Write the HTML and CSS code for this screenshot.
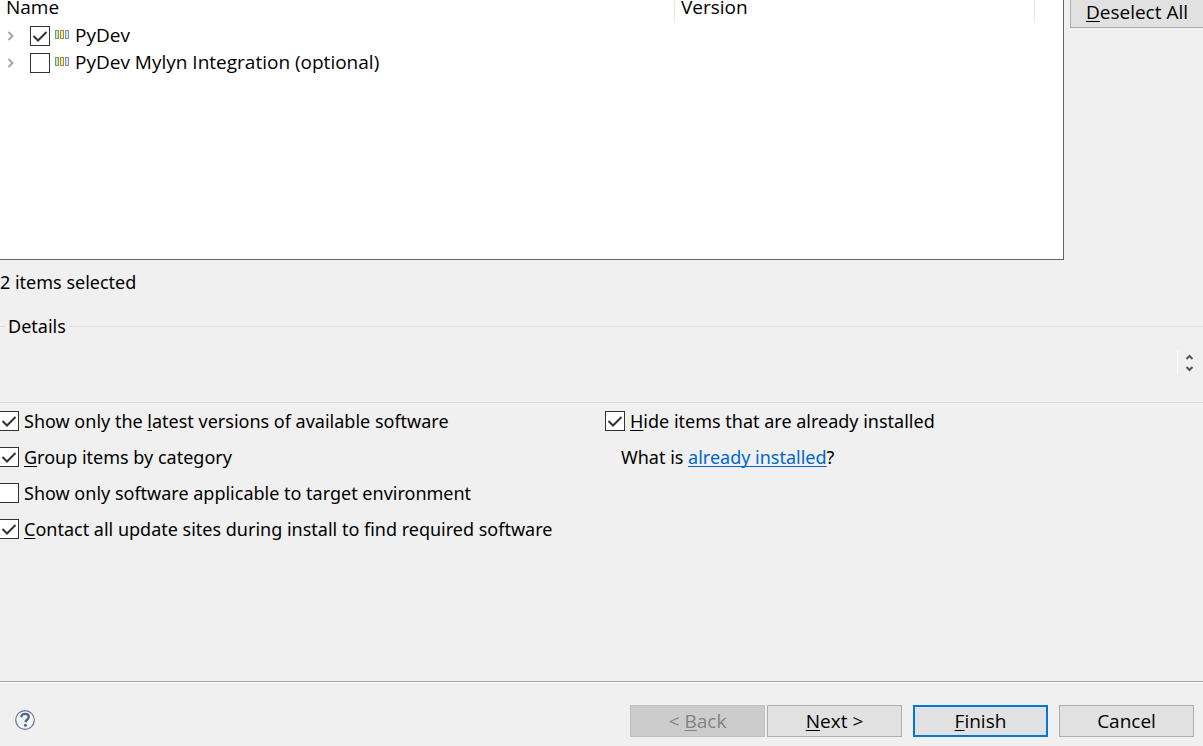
FILE: index.html
```html
<!DOCTYPE html>
<html lang="en">
<head>
<meta charset="utf-8">
<title>Install</title>
<link rel="stylesheet" href="styles.css">
</head>
<body>
<svg class="defs" aria-hidden="true">
  <symbol id="chevron" viewBox="0 0 6 10"><path d="M.5 1l4 4-4 4" fill="none" stroke="#a6a6a6" stroke-width="2"/></symbol>
  <symbol id="category" viewBox="0 0 14 9">
    <rect x=".5" y=".5" width="3" height="8" fill="#cfe5a6" stroke="#6b9f7c"/>
    <rect x="5.5" y=".5" width="3" height="8" fill="#fbe9a9" stroke="#b58a26"/>
    <rect x="10.5" y=".5" width="3" height="8" fill="#d3e4f8" stroke="#7892bd"/>
  </symbol>
</svg>
<main class="page">
  <section class="software">
    <div class="tree">
      <table class="tree-table">
        <thead>
          <tr><th class="col-name">Name</th><th class="col-version">Version</th><th class="col-rest"></th></tr>
        </thead>
        <tbody>
          <tr>
            <td><div class="item"><svg class="chevron"><use href="#chevron"/></svg><input class="check" type="checkbox" id="pydev" checked><svg class="category"><use href="#category"/></svg><label for="pydev">PyDev</label></div></td>
            <td></td><td></td>
          </tr>
          <tr>
            <td><div class="item"><svg class="chevron"><use href="#chevron"/></svg><input class="check" type="checkbox" id="mylyn"><svg class="category"><use href="#category"/></svg><label for="mylyn">PyDev Mylyn Integration (optional)</label></div></td>
            <td></td><td></td>
          </tr>
        </tbody>
      </table>
    </div>
    <div class="side"><button class="button side-button" type="button"><span><u>D</u>eselect All</span></button></div>
  </section>
  <p class="status">2 items selected</p>
  <fieldset class="details">
    <legend>Details</legend>
    <div class="scroller">
      <button type="button" aria-label="Scroll up"><svg viewBox="0 0 8 6"><path d="M1 5l3-3 3 3" fill="none" stroke="#555" stroke-width="2"/></svg></button>
      <button type="button" aria-label="Scroll down"><svg viewBox="0 0 8 6"><path d="M1 1l3 3 3-3" fill="none" stroke="#555" stroke-width="2"/></svg></button>
    </div>
  </fieldset>
  <section class="options">
    <div class="column">
      <label class="option"><input class="check" type="checkbox" checked><span>Show only the <u>l</u>atest versions of available software</span></label>
      <label class="option"><input class="check" type="checkbox" checked><span><u>G</u>roup items by category</span></label>
      <label class="option"><input class="check" type="checkbox"><span>Show only software applicable to target environment</span></label>
      <label class="option"><input class="check" type="checkbox" checked><span><u>C</u>ontact all update sites during install to find required software</span></label>
    </div>
    <div class="column">
      <label class="option"><input class="check" type="checkbox" checked><span><u>H</u>ide items that are already installed</span></label>
      <p class="hint">What is <a href="#">already installed</a>?</p>
    </div>
  </section>
</main>
<footer class="footer">
  <button class="help" type="button" aria-label="Help">
    <svg viewBox="0 0 20 20"><circle cx="10" cy="10" r="9.3" fill="#f4f5f7" stroke="#647899" stroke-width="1.2"/><path d="M6.4 7.3C6.3 4.9 8 3.9 10.1 3.9c2.2 0 3.7 1.2 3.7 3 0 2.5-3.3 2.7-3.3 5.3" fill="none" stroke="#4d648d" stroke-width="2.3"/><circle cx="10.4" cy="15.2" r="1.5" fill="#4d648d"/></svg>
  </button>
  <div class="actions">
    <div class="pair">
      <button class="button" type="button" disabled><span>&lt; <u>B</u>ack</span></button>
      <button class="button" type="button"><span><u>N</u>ext &gt;</span></button>
    </div>
    <button class="button primary" type="button"><span><u>F</u>inish</span></button>
    <button class="button" type="button"><span>Cancel</span></button>
  </div>
</footer>
</body>
</html>
```
FILE: styles.css
```css
* { box-sizing: border-box; }
body {
  margin: 0;
  min-height: 100vh;
  display: flex;
  flex-direction: column;
  overflow-x: hidden;
  background: #f0f0f0;
  color: #000;
  font: 19px/24px "Open Sans", "Noto Sans", sans-serif;
}
button, input { font: inherit; color: inherit; margin: 0; }
p { margin: 0; }
u, a { text-underline-offset: 2px; text-decoration-thickness: 1px; text-decoration-skip-ink: none; }
svg { display: block; }
.defs { display: none; }
.page { flex: 1; }

.software { display: flex; }
.tree {
  flex: 1;
  min-height: 260px;
  background: #fff;
  border: solid #646464;
  border-width: 0 1px 1px 0;
}
.tree-table { width: 100%; border-spacing: 0; table-layout: fixed; }
.tree-table th {
  height: 22px;
  padding: 0 6px 8px;
  border-right: 1px solid #e5e5e5;
  font-weight: 400;
  line-height: 14px;
  text-align: left;
}
.tree-table .col-name { width: 675px; }
.tree-table .col-version { width: 360px; }
.tree-table .col-rest { border: 0; }
.tree-table td { height: 27px; padding: 0; }
.item { display: flex; align-items: center; padding-left: 8px; }
.item label { padding-bottom: 2px; }
.chevron { width: 6px; height: 10px; margin-right: 16px; }
.category { width: 14px; height: 9px; margin: 0 6px 2px 5px; }

.check {
  appearance: none;
  flex: none;
  width: 20px;
  height: 20px;
  border: 1px solid #333;
  background: #fff;
}
.check:checked {
  background: #fff url("data:image/svg+xml,%3Csvg xmlns='http://www.w3.org/2000/svg' viewBox='0 0 18 18'%3E%3Cpath d='M2.5 9l4.500 4.500L15.500 5' fill='none' stroke='%23333' stroke-width='2'/%3E%3C/svg%3E") center / 18px 18px no-repeat;
}

.side { width: 139px; padding-left: 6px; }
.button {
  width: 135px;
  height: 32px;
  padding: 0;
  border: 1px solid #adadad;
  background: #e1e1e1;
}
.side-button { width: 100%; height: 28px; padding-bottom: 4px; border-width: 0 0 1px 1px; }
.button:disabled { background: #ccc; border-color: #bfbfbf; color: #838383; }
.primary { border: 2px solid #0078d7; }

.status, .details, .options { font-family: "Noto Sans", "Open Sans", sans-serif; font-size: 18px; }
.status { padding: 10px 0 20px; }
.details {
  display: flex;
  justify-content: flex-end;
  margin: 0;
  padding: 12px 9px 28px;
  border: solid #dcdcdc;
  border-width: 1px 0;
  min-width: 0;
}
.details legend { margin-left: -4px; padding: 0 3px; }
.scroller {
  display: flex;
  flex-direction: column;
  justify-content: center;
  gap: 6px;
  height: 24px;
  padding: 2px 0 0 7px;
  border-left: 1px solid #fff;
}
.scroller button { display: block; padding: 0; border: 0; background: none; }
.scroller svg { width: 9px; height: 6px; }

.options {
  display: grid;
  grid-template-columns: 1fr 1fr;
  gap: 8px;
  margin-left: -1px;
  padding-top: 6px;
}
.column { display: flex; flex-direction: column; gap: 12px; }
.option { display: flex; align-items: center; gap: 5px; }
.hint { padding-left: 16px; }
.hint a { color: #0066cc; }

.footer {
  display: flex;
  align-items: flex-end;
  justify-content: space-between;
  padding: 23px 9px 9px 15px;
  border-top: 1px solid #a0a0a0;
  box-shadow: inset 0 1px #fff;
}
.help { width: 20px; height: 20px; margin-bottom: 7px; padding: 0; border: 0; background: none; }
.actions { display: flex; gap: 11px; }
.pair { display: flex; gap: 2px; }
```
